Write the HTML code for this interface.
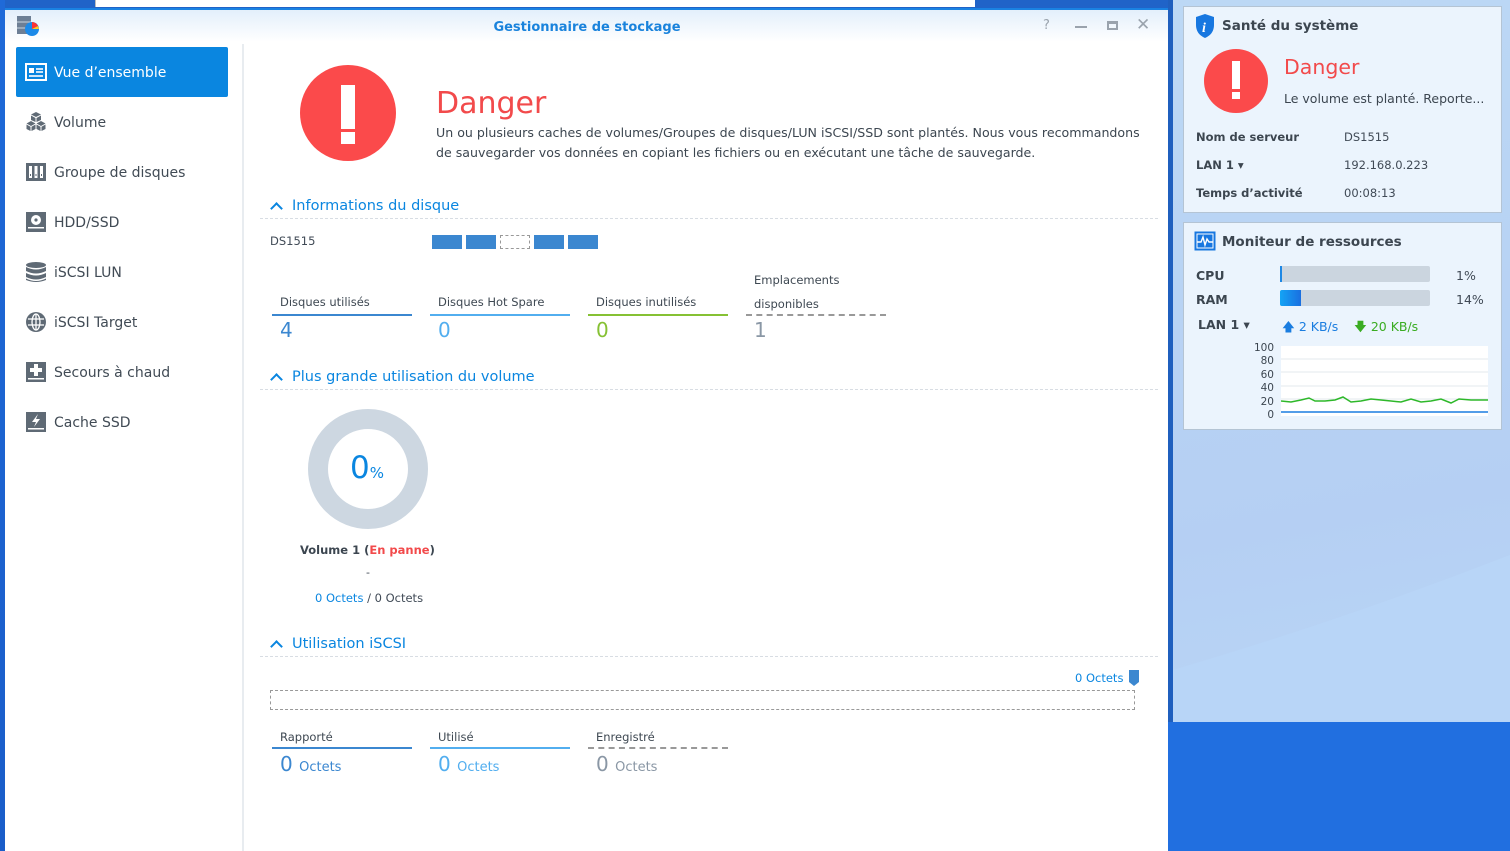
<!DOCTYPE html>
<html><head><meta charset="utf-8"><style>
*{margin:0;padding:0;box-sizing:border-box}
body{width:1510px;height:851px;overflow:hidden;position:relative;background:#216fe0;font-family:"DejaVu Sans","Liberation Sans",sans-serif;color:#404a56}
.a{position:absolute;white-space:nowrap}
.side .it{position:absolute;left:16px;width:212px;height:50px;font-size:14px;color:#414b55;line-height:52px;padding-left:38px}
.side .ic{position:absolute;left:9px;top:14px;width:22px;height:22px}
.sec{position:absolute;left:260px;width:898px;height:24px;border-bottom:1px dashed #d8dde3;color:#0a86e0;font-size:14.5px;padding-left:32px;line-height:22px}
.sec:before{content:"";position:absolute;left:12px;top:9px;width:7px;height:7px;border-left:2px solid #0a86e0;border-top:2px solid #0a86e0;transform:rotate(45deg)}
.st{position:absolute;font-size:11.5px;color:#3e4852;padding-left:8px;line-height:20px}
.bl{position:absolute;height:2px}
.num{position:absolute;font-size:20px}
.lbl{font-size:11.5px;font-weight:bold;color:#3c4650}
.card{position:absolute;left:1183px;width:319px;background:#ebf4fd;border:1px solid #b4c4d4}
</style></head><body>
<div class="a" style="left:0;top:0;width:1172px;height:9px;background:#2063c8"></div>
<div class="a" style="left:95px;top:0;width:880px;height:7px;background:#fff;border-left:1px solid #bbb"></div>
<div class="a" style="left:0;top:0;width:5px;height:851px;background:linear-gradient(#1f6ad8,#1a5dc9)"></div>
<div class="a" style="left:1168px;top:0;width:5px;height:722px;background:#1f5fbe"></div>
<div class="a" style="left:1173px;top:0;width:337px;height:722px;background:linear-gradient(170deg,#bcd8f5 0%,#b5cff3 70%,#b9d6f6 100%)"></div>
<svg class="a" style="left:1173px;top:0" width="337" height="722"><path d="M0 670 Q170 620 337 555 L337 722 L0 722Z" fill="#b8d5f7"/></svg>

<div class="card" style="top:6px;height:207px">
 <svg class="a" style="left:10px;top:6px" width="22" height="26" viewBox="0 0 22 26"><path d="M11 1 L20 4 L20 12 Q20 21 11 25 Q2 21 2 12 L2 4Z" fill="#1777e0"/><text x="8" y="19" font-size="14" font-style="italic" font-weight="bold" fill="#fff" font-family="Liberation Serif,serif">i</text></svg>
 <div class="a" style="left:38px;top:11px;font-size:13.5px;font-weight:bold;color:#3c4650">Santé du système</div>
 <div class="a" style="left:20px;top:42px;width:64px;height:64px;border-radius:50%;background:#fb4a4b"></div>
 <div class="a" style="left:48px;top:54px;width:8px;height:28px;background:#fff"></div>
 <div class="a" style="left:48px;top:85px;width:8px;height:7px;background:#fff"></div>
 <div class="a" style="left:100px;top:48px;font-size:20.5px;color:#f24a4b">Danger</div>
 <div class="a" style="left:100px;top:84px;font-size:12.5px;color:#3c4650">Le volume est planté. Reporte...</div>
 <div class="a lbl" style="left:12px;top:123px">Nom de serveur</div><div class="a" style="left:160px;top:123px;font-size:11.5px">DS1515</div>
 <div class="a lbl" style="left:12px;top:151px">LAN 1 ▾</div><div class="a" style="left:160px;top:151px;font-size:11.5px">192.168.0.223</div>
 <div class="a lbl" style="left:12px;top:179px">Temps d’activité</div><div class="a" style="left:160px;top:179px;font-size:11.5px">00:08:13</div>
</div>
<div class="card" style="top:222px;height:208px">
 <svg class="a" style="left:10px;top:8px" width="22" height="20"><rect x="0.5" y="0.5" width="21" height="19" fill="#1777e0"/><rect x="3" y="3" width="16" height="14" fill="none" stroke="#fff"/><path d="M3 11 H7 L9 6 L11 14 L13 8 L15 11 H19" stroke="#fff" fill="none" stroke-width="1.4"/></svg>
 <div class="a" style="left:38px;top:11px;font-size:13.5px;font-weight:bold;color:#3c4650">Moniteur de ressources</div>
 <div class="a lbl" style="left:12px;top:45px;font-size:12.5px">CPU</div>
 <div class="a" style="left:96px;top:43px;width:150px;height:16px;background:#cbd5df;border-radius:2px"><div style="width:2px;height:16px;background:#1e88e5"></div></div>
 <div class="a" style="left:272px;top:45px;font-size:12.5px">1%</div>
 <div class="a lbl" style="left:12px;top:69px;font-size:12.5px">RAM</div>
 <div class="a" style="left:96px;top:67px;width:150px;height:16px;background:#cbd5df;border-radius:2px"><div style="width:21px;height:16px;background:linear-gradient(90deg,#14a4f5,#1a6fe0);border-radius:2px 0 0 2px"></div></div>
 <div class="a" style="left:272px;top:69px;font-size:12.5px">14%</div>
 <div class="a lbl" style="left:14px;top:94px;font-size:12.5px">LAN 1 ▾</div>
 <div class="a" style="left:98px;top:95px;font-size:12.5px;color:#1a7de0">🡅 2 KB/s</div>
 <div class="a" style="left:170px;top:95px;font-size:12.5px;color:#3aac22">🡇 20 KB/s</div>
 <div class="a" style="left:66px;top:119px;font-size:10.5px;line-height:13.4px;text-align:right;width:24px;color:#3c4650">100<br>80<br>60<br>40<br>20<br>0</div>
 <svg class="a" style="left:97px;top:123px" width="207" height="70"><rect width="207" height="70" fill="#fff"/><g stroke="#e3e8ee"><line x1="0" y1="13" x2="207" y2="13"/><line x1="0" y1="26" x2="207" y2="26"/><line x1="0" y1="40" x2="207" y2="40"/><line x1="0" y1="53" x2="207" y2="53"/></g><polyline fill="none" stroke="#2eb82a" stroke-width="1.5" points="0,55 10,56 20,54 28,52 34,55 44,55 54,54 62,51 70,56 80,55 90,53 100,54 110,55 120,56 130,53 140,56 150,55 160,53 170,57 178,53 190,54 207,54"/><polyline fill="none" stroke="#1a7de0" stroke-width="1.5" points="0,66 207,66"/></svg>
</div>

<div class="a" style="left:5px;top:8px;width:1163px;height:843px;background:#fff;border-top:2px solid #1a82e2"></div>
<div class="a" style="left:5px;top:10px;width:1163px;height:32px;background:linear-gradient(#e3effb,#fff)"></div>
<svg class="a" style="left:16px;top:15px" width="24" height="22"><rect x="1" y="1" width="14" height="18" fill="#6d7f95"/><g stroke="#c9d4e0"><line x1="1" y1="7" x2="15" y2="7"/><line x1="1" y1="13" x2="15" y2="13"/></g><circle cx="16" cy="14" r="7" fill="#1c8ae8"/><path d="M16 14 L16 7 A7 7 0 0 1 22 11Z" fill="#f33"/><path d="M16 14 L22 11 A7 7 0 0 1 23 14Z" fill="#fc2"/></svg>
<div class="a" style="left:0;width:1174px;top:20px;text-align:center;font-size:13px;font-weight:bold;color:#1a83dc">Gestionnaire de stockage</div>
<div class="a" style="left:1043px;top:18px;font-size:13px;color:#9aa3ad">?</div>
<div class="a" style="left:1075px;top:26px;width:12px;height:2px;background:#9aa3ad"></div>
<div class="a" style="left:1107px;top:21px;width:11px;height:9px;border:2px solid #9aa3ad;border-top-width:3px"></div>
<div class="a" style="left:1136px;top:15px;font-size:17px;color:#9aa3ad">✕</div>
<div class="a" style="left:242px;top:44px;width:2px;height:807px;background:#e8ecf0"></div>

<div class="side">
 <div class="it" style="top:47px;background:#0a86e0;color:#fff;border-radius:2px"><svg class="ic" viewBox="0 0 22 22"><rect x="1" y="3" width="20" height="16" fill="none" stroke="#fff" stroke-width="2"/><rect x="4" y="7" width="5" height="5" fill="#fff"/><g stroke="#fff" stroke-width="1.6"><line x1="11" y1="8" x2="18" y2="8"/><line x1="11" y1="11" x2="18" y2="11"/><line x1="4" y1="15" x2="18" y2="15"/></g></svg>Vue d’ensemble</div>
 <div class="it" style="top:97px"><svg class="ic" viewBox="0 0 22 22" fill="#5f6a75"><path d="M11 1 L16 3.5 L11 6 L6 3.5Z M6 4.5 L10.5 7 L10.5 11 L6 9Z M16 4.5 L11.5 7 L11.5 11 L16 9Z M6 10 L10.5 12.5 L6 15 L1.5 12.5Z M1.5 13.5 L5.5 15.7 L5.5 20 L1.5 18Z M6.5 15.7 L10.5 13.5 L10.5 18 L6.5 20Z M16 10 L20.5 12.5 L16 15 L11.5 12.5Z M11.5 13.5 L15.5 15.7 L15.5 20 L11.5 18Z M16.5 15.7 L20.5 13.5 L20.5 18 L16.5 20Z"/></svg>Volume</div>
 <div class="it" style="top:147px"><svg class="ic" viewBox="0 0 22 22"><rect x="1" y="2" width="20" height="18" fill="#5f6a75"/><g fill="#fff"><rect x="4" y="5" width="3" height="12"/><rect x="9.5" y="5" width="3" height="12"/><rect x="15" y="5" width="3" height="12"/></g><g fill="#5f6a75"><rect x="5" y="13" width="1" height="2"/><rect x="10.5" y="13" width="1" height="2"/><rect x="16" y="13" width="1" height="2"/></g></svg>Groupe de disques</div>
 <div class="it" style="top:197px"><svg class="ic" viewBox="0 0 22 22"><rect x="1" y="1" width="20" height="20" fill="#5f6a75"/><circle cx="11" cy="9" r="5" fill="#fff"/><circle cx="11" cy="9" r="1.6" fill="#5f6a75"/><rect x="3" y="16" width="16" height="1.5" fill="#fff"/></svg>HDD/SSD</div>
 <div class="it" style="top:247px"><svg class="ic" viewBox="0 0 22 22" fill="#5f6a75"><ellipse cx="11" cy="4" rx="10" ry="3"/><path d="M1 6 Q11 11 21 6 V10 Q11 15 1 10Z M1 12 Q11 17 21 12 V16 Q11 21 1 16Z M1 17.5 Q11 22.5 21 17.5 V19 Q11 23 1 19Z"/></svg>iSCSI LUN</div>
 <div class="it" style="top:297px"><svg class="ic" viewBox="0 0 22 22"><circle cx="11" cy="11" r="10" fill="#5f6a75"/><g stroke="#fff" stroke-width="1.3" fill="none"><ellipse cx="11" cy="11" rx="4" ry="8"/><line x1="11" y1="3" x2="11" y2="19"/><line x1="3" y1="8" x2="19" y2="8"/><line x1="3" y1="14" x2="19" y2="14"/></g></svg>iSCSI Target</div>
 <div class="it" style="top:347px"><svg class="ic" viewBox="0 0 22 22"><rect x="1" y="1" width="20" height="20" fill="#5f6a75"/><path d="M9 4h4v4h4v4h-4v4h-4v-4h-4v-4h4z" fill="#fff" transform="translate(0,-1)"/><rect x="3" y="17" width="16" height="1.5" fill="#fff"/></svg>Secours à chaud</div>
 <div class="it" style="top:397px"><svg class="ic" viewBox="0 0 22 22"><rect x="1" y="1" width="20" height="20" fill="#5f6a75"/><path d="M13 3 L7 11 H11 L9 16 L15 8 H11Z" fill="#fff"/><rect x="3" y="17" width="16" height="1.5" fill="#fff"/></svg>Cache SSD</div>
</div>

<div class="a" style="left:300px;top:65px;width:96px;height:96px;border-radius:50%;background:#fb4a4b"></div>
<div class="a" style="left:341px;top:85px;width:14px;height:44px;background:#fff"></div>
<div class="a" style="left:341px;top:132px;width:14px;height:12px;background:#fff"></div>
<div class="a" style="left:436px;top:86px;font-size:30px;color:#f24a4b">Danger</div>
<div class="a" style="left:436px;top:123px;font-size:12.6px;line-height:20px;color:#3c4650">Un ou plusieurs caches de volumes/Groupes de disques/LUN iSCSI/SSD sont plantés. Nous vous recommandons<br>de sauvegarder vos données en copiant les fichiers ou en exécutant une tâche de sauvegarde.</div>

<div class="sec" style="top:195px">Informations du disque</div>
<div class="a" style="left:270px;top:234px;font-size:11.5px">DS1515</div>
<div class="a" style="left:432px;top:235px;width:30px;height:14px;background:#3b87d0"></div>
<div class="a" style="left:466px;top:235px;width:30px;height:14px;background:#3b87d0"></div>
<div class="a" style="left:500px;top:235px;width:30px;height:14px;border:1px dashed #999"></div>
<div class="a" style="left:534px;top:235px;width:30px;height:14px;background:#3b87d0"></div>
<div class="a" style="left:568px;top:235px;width:30px;height:14px;background:#3b87d0"></div>

<div class="st" style="left:272px;top:292px">Disques utilisés</div><div class="bl" style="left:272px;top:314px;width:140px;background:#3b87d0"></div><div class="num" style="left:280px;top:318px;color:#3b87d0">4</div>
<div class="st" style="left:430px;top:292px">Disques Hot Spare</div><div class="bl" style="left:430px;top:314px;width:140px;background:#52aeef"></div><div class="num" style="left:438px;top:318px;color:#52aeef">0</div>
<div class="st" style="left:588px;top:292px">Disques inutilisés</div><div class="bl" style="left:588px;top:314px;width:140px;background:#86c134"></div><div class="num" style="left:596px;top:318px;color:#86c134">0</div>
<div class="st" style="left:746px;top:268px;line-height:24px">Emplacements<br>disponibles</div><div class="bl" style="left:746px;top:314px;width:140px;border-top:2px dashed #999"></div><div class="num" style="left:754px;top:318px;color:#8a97a5">1</div>

<div class="sec" style="top:366px">Plus grande utilisation du volume</div>
<svg class="a" style="left:308px;top:409px" width="120" height="120"><circle cx="60" cy="60" r="50" fill="none" stroke="#cdd7e1" stroke-width="20"/></svg>
<div class="a" style="left:350px;top:450px;font-size:31px;color:#0a86e0">0<span style="font-size:15px">%</span></div>
<div class="a" style="left:300px;top:543px;font-size:11.5px;font-weight:bold;color:#3c4650">Volume 1 (<span style="color:#f24a4b">En panne</span>)</div>
<div class="a" style="left:366px;top:566px;font-size:11px">-</div>
<div class="a" style="left:315px;top:591px;font-size:11.5px"><span style="color:#0a86e0">0 Octets</span> / 0 Octets</div>

<div class="sec" style="top:633px">Utilisation iSCSI</div>
<div class="a" style="left:1075px;top:671px;font-size:11.5px;color:#0a86e0">0 Octets</div>
<svg class="a" style="left:1129px;top:670px" width="11" height="17"><path d="M0 0H10V12L5 16L0 12Z" fill="#3b87d0"/></svg>
<div class="a" style="left:270px;top:690px;width:865px;height:20px;border:1px dashed #999"></div>
<div class="st" style="left:272px;top:727px">Rapporté</div><div class="bl" style="left:272px;top:747px;width:140px;background:#3b87d0"></div><div class="a" style="left:280px;top:752px;color:#3b87d0;font-size:20px">0 <span style="font-size:13px">Octets</span></div>
<div class="st" style="left:430px;top:727px">Utilisé</div><div class="bl" style="left:430px;top:747px;width:140px;background:#52aeef"></div><div class="a" style="left:438px;top:752px;color:#52aeef;font-size:20px">0 <span style="font-size:13px">Octets</span></div>
<div class="st" style="left:588px;top:727px">Enregistré</div><div class="bl" style="left:588px;top:747px;width:140px;border-top:2px dashed #999"></div><div class="a" style="left:596px;top:752px;color:#8a97a5;font-size:20px">0 <span style="font-size:13px">Octets</span></div>
</body></html>
